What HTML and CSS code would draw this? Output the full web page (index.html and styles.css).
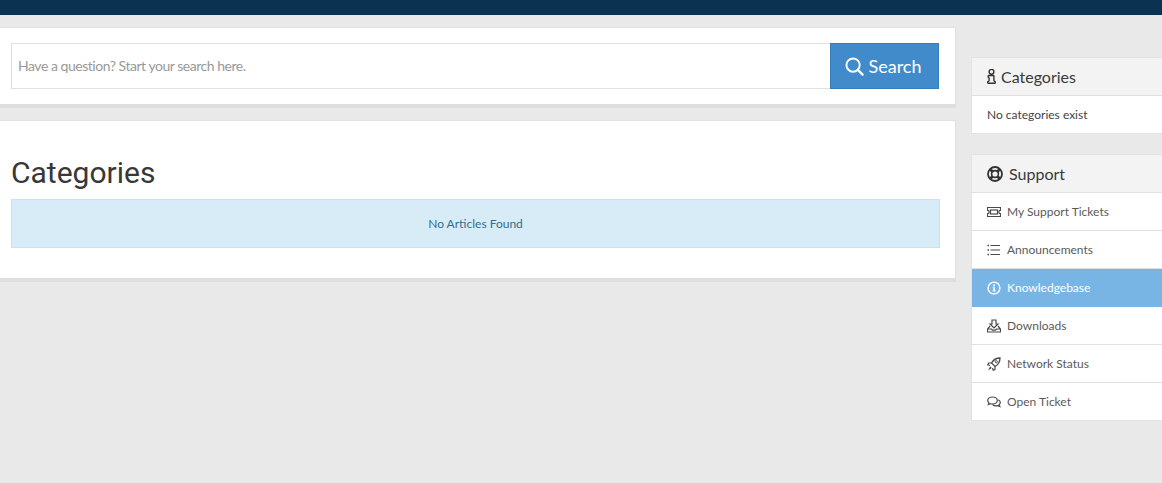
FILE: index.html
```html
<!DOCTYPE html>
<html lang="en">
<head>
<meta charset="utf-8">
<title>Knowledgebase</title>
<link rel="stylesheet" href="styles.css">
</head>
<body>
<div class="topbar"></div>
<div class="layout">
  <main class="main">
    <section class="card search-card">
      <form class="search">
        <input class="search-input" type="text" placeholder="Have a question? Start your search here.">
        <button class="search-btn" type="button">
          <svg class="search-icon" viewBox="0 0 20 20"><circle cx="8.500" cy="8.500" r="7" fill="none" stroke="#fff" stroke-width="2"/><path d="M13.600 13.600L18.500 18.500" stroke="#fff" stroke-width="2.400" stroke-linecap="round"/></svg>
          <span>Search</span>
        </button>
      </form>
    </section>
    <section class="card content-card">
      <h1 class="title">Categories</h1>
      <div class="alert">No Articles Found</div>
    </section>
  </main>
  <aside class="sidebar">
    <div class="panel">
      <div class="panel-head">
        <svg class="head-icon info-i" viewBox="0 0 9 15"><circle cx="4.500" cy="2.800" r="2.400" fill="none" stroke="#333" stroke-width="1.400"/><path d="M1.800 6.500H6.300C6.800 6.500 6.900 6.800 6.900 7.200V11.600C6.900 12.300 8.300 12.300 8.300 13V13.400C8.300 14 8 14.300 7.500 14.300H1.500C1 14.300 .7 14 .7 13.400V13C.7 12.300 2.100 12.300 2.100 11.600V9C2.100 8.500 1.200 8.600 1.200 8V7.200C1.200 6.800 1.400 6.500 1.800 6.500Z" fill="none" stroke="#333" stroke-width="1.400"/></svg>
        <span>Categories</span>
      </div>
      <div class="panel-body">No categories exist</div>
    </div>
    <div class="panel">
      <div class="panel-head">
        <svg class="head-icon life" viewBox="0 0 16 16"><circle cx="8" cy="8" r="7" fill="none" stroke="#333" stroke-width="1.800"/><circle cx="8" cy="8" r="3.400" fill="none" stroke="#333" stroke-width="1.600"/><path d="M3 3L5.700 5.700M13 3L10.300 5.700M3 13L5.700 10.300M13 13L10.300 10.300" stroke="#333" stroke-width="2.800"/></svg>
        <span>Support</span>
      </div>
      <nav class="menu">
        <a class="item" href="#"><svg class="icon" viewBox="0 0 14 14"><path d="M.5 2.500H13.500V5.300A1.700 1.700 0 0 0 13.500 8.700V11.500H.5V8.700A1.700 1.700 0 0 0 .5 5.300Z" fill="none" stroke="currentColor" stroke-width="1.200"/><rect x="3.500" y="5" width="7" height="4" fill="none" stroke="currentColor" stroke-width="1.200"/></svg>My Support Tickets</a>
        <a class="item" href="#"><svg class="icon" viewBox="0 0 14 14"><path d="M3.500 2.500H13M3.500 7H13M3.500 11.500H13" stroke="currentColor" stroke-width="1.200"/><path d="M.5 2.500H2M.5 7H2M.5 11.500H2" stroke="currentColor" stroke-width="1.700"/></svg>Announcements</a>
        <a class="item active" href="#"><svg class="icon" viewBox="0 0 14 14"><circle cx="7" cy="7" r="5.900" fill="none" stroke="currentColor" stroke-width="1.400"/><circle cx="7" cy="4.400" r="1.100" fill="currentColor"/><path d="M5.700 6.200H7.900V9.500H8.700V10.500H5.500V9.500H6.300V7.100H5.700Z" fill="currentColor"/></svg>Knowledgebase</a>
        <a class="item" href="#"><svg class="icon" viewBox="0 0 14 14"><path d="M5 1H9V5H11L7 9L3 5H5Z" fill="none" stroke="currentColor" stroke-width="1.200"/><path d="M3 7L.5 10V13H13.500V10L11 7M.5 10H4.500L5.500 11.200H8.500L9.500 10H13.500" fill="none" stroke="currentColor" stroke-width="1.200"/></svg>Downloads</a>
        <a class="item" href="#"><svg class="icon" viewBox="0 0 14 14"><path d="M13 1C9.500 1 6.500 2.500 4.500 6L8 9.500C11.500 7.500 13 4.500 13 1Z" fill="none" stroke="currentColor" stroke-width="1.300"/><circle cx="9.300" cy="4.700" r="1.100" fill="none" stroke="currentColor"/><path d="M4.500 6H1.500L.8 7.800L3 8.500M8 9.500V12.500L6.200 13.200L5.500 11M4 10C3 10.500 2.500 11.500 2.300 12C3 11.800 3.800 11.300 4.300 10.500" fill="none" stroke="currentColor" stroke-width="1.200"/></svg>Network Status</a>
        <a class="item" href="#"><svg class="icon" viewBox="0 0 14 14"><path d="M5.500 2C2.800 2 .7 3.500 .7 5.500C.7 6.500 1.200 7.300 2 7.900L1.300 9.500L3.500 8.700C4.100 8.900 4.800 9 5.500 9C8.200 9 10.300 7.500 10.300 5.500S8.200 2 5.500 2Z" fill="none" stroke="currentColor" stroke-width="1.200"/><path d="M11.300 4.800C12.500 5.400 13.300 6.400 13.300 7.500C13.300 8.500 12.800 9.200 12 9.800L12.800 11.500L10.500 10.600C8.700 11.100 6.700 10.600 5.600 9.500" fill="none" stroke="currentColor" stroke-width="1.200"/></svg>Open Ticket</a>
      </nav>
    </div>
  </aside>
</div>
</body>
</html>
```
FILE: styles.css
```css
* { box-sizing: border-box; }
html, body { margin: 0; height: 100%; overflow: hidden; }
body {
  background: #e9e9e9;
  font-family: Lato, "Liberation Sans", sans-serif;
  color: #333;
}
.topbar { height: 15px; background: #0c3251; }
.layout { display: flex; align-items: flex-start; }
.main { flex: 0 0 956px; padding-top: 12px; }
.sidebar { flex: 0 0 auto; width: 200px; margin-left: 15px; padding-top: 42px; }

.card {
  background: #fff;
  border-top: 1px solid #e0e0e0;
  border-right: 1px solid #e0e0e0;
  border-bottom: 4px solid #dedede;
}
.search-card { height: 81px; padding: 15px 16px 0 11px; margin-bottom: 12px; }
.search { display: flex; height: 46px; }
.search-input {
  flex: 1;
  min-width: 0;
  height: 46px;
  border: 1px solid #e0e0e0;
  border-right: 0;
  padding: 0 6px 2px;
  font: 14px Lato, sans-serif;
  letter-spacing: -0.47px;
  color: #333;
  background: #fff;
  outline: 0;
}
.search-input::placeholder { color: #999; opacity: 1; }
.search-btn {
  flex: 0 0 109px;
  display: flex;
  align-items: center;
  justify-content: center;
  gap: 5px;
  height: 46px;
  padding: 0 3px 0 0;
  background: #428bca;
  border: 1px solid #357ebd;
  color: #fff;
  font: 18px Lato, sans-serif;
}
.search-icon { width: 19px; height: 19px; }

.content-card { height: 162px; padding: 0 15px 0 11px; }
.title {
  margin: 0;
  padding-top: 34px;
  height: 78px;
  font: 400 30px/36px Roboto, sans-serif;
  color: #383838;
}
.alert {
  height: 49px;
  border: 1px solid #bce8f1;
  background: #d8ecf8;
  color: #31708f;
  font-size: 12px;
  line-height: 47px;
  text-align: center;
}

.panel {
  background: #fff;
  border: 1px solid #e3e3e3;
  border-right: 0;
  margin-bottom: 20px;
}
.panel-head {
  display: flex;
  align-items: center;
  height: 38px;
  padding-left: 15px;
  background: #f3f3f3;
  border-bottom: 1px solid #e0e0e0;
  font-size: 16px;
  color: #3a3a3a;
}
.head-icon { flex: none; }
.info-i { width: 9px; height: 15px; margin-right: 5px; }
.life { width: 16px; height: 16px; margin-right: 6px; }
.panel-body { height: 37px; padding-left: 15px; font-size: 12px; line-height: 38px; color: #444; }
.menu { display: flex; flex-direction: column; }
.item {
  display: flex;
  align-items: center;
  height: 38px;
  padding-left: 15px;
  border-bottom: 1px solid #e0e0e0;
  font-size: 12px;
  color: #5a5a5a;
  text-decoration: none;
}
.item:last-child { border-bottom: 0; height: 37px; }
.item.active { background: #78b5e5; color: #fff; border-bottom-color: #78b5e5; }
.icon { flex: none; width: 14px; height: 14px; margin-right: 6px; color: #4a4a4a; }
.active .icon { color: #fff; }
```
